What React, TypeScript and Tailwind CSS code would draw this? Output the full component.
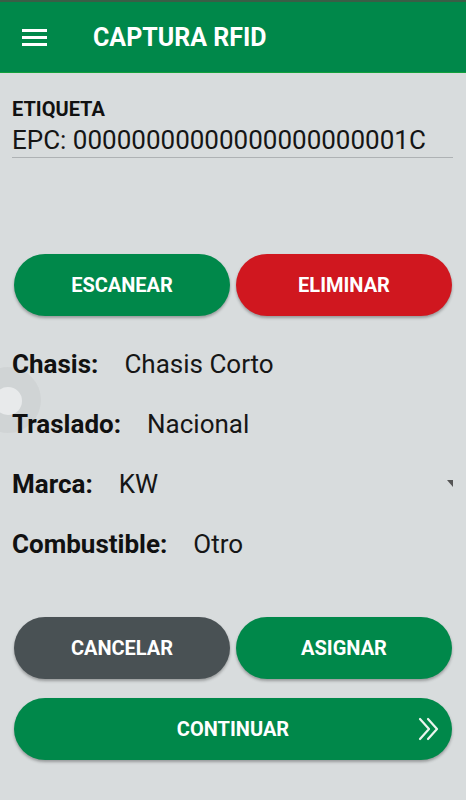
import React from "react";

const font = { fontFamily: "Roboto, 'Noto Sans', sans-serif" };

function Row({ label, value, dropdown }: { label: string; value: string; dropdown?: boolean }) {
  return (
    <div className="relative flex items-center h-[26px] leading-none text-[26px]">
      <span className="font-bold text-[#111]">{label}</span>
      <span className="ml-[26px] text-[#161616]">{value}</span>
      {dropdown && (
        <svg className="absolute right-[1px] top-[9px]" width="6" height="7" viewBox="0 0 6 7">
          <polygon points="0,0 6,0 6,7" fill="#555" />
        </svg>
      )}
    </div>
  );
}

export default function App() {
  return (
    <div className="relative w-[466px] h-[800px] bg-[#d8dcdd] overflow-hidden" style={font}>
      {/* Toolbar */}
      <header className="h-[73px] bg-[#00884a] border-t-2 border-t-[#3a5e46] border-b border-b-[#12a03c] flex items-center">
        <div className="ml-[22px] w-[25px] flex flex-col gap-[4px]">
          <span className="h-[3px] bg-white" />
          <span className="h-[3px] bg-white" />
          <span className="h-[3px] bg-white" />
        </div>
        <h1 className="ml-[46px] text-white text-[25px] font-bold leading-none">CAPTURA RFID</h1>
      </header>

      <main className="px-3">
        {/* Etiqueta */}
        <div className="pt-[26px]">
          <div className="text-[20px] leading-none font-bold text-[#111]">ETIQUETA</div>
          <div className="mt-[8px] mr-[1px] pb-[4px] border-b border-[#aeb2b4] text-[26px] leading-none text-[#151515] whitespace-nowrap">
            EPC: 00000000000000000000001C
          </div>
        </div>

        {/* Scan / delete */}
        <div className="mt-[96px] grid grid-cols-2 gap-[6px] px-[2px]">
          <button className="h-[62px] rounded-full bg-[#00884a] text-white text-[20px] font-bold shadow-[0_2px_3px_rgba(0,0,0,0.3)]">
            ESCANEAR
          </button>
          <button className="h-[62px] rounded-full bg-[#d0171f] text-white text-[20px] font-bold shadow-[0_2px_3px_rgba(0,0,0,0.3)]">
            ELIMINAR
          </button>
        </div>

        {/* Fields */}
        <div className="mt-[35px] flex flex-col gap-[34px]">
          <Row label="Chasis:" value="Chasis Corto" />
          <Row label="Traslado:" value="Nacional" />
          <Row label="Marca:" value="KW" dropdown />
          <Row label="Combustible:" value="Otro" />
        </div>

        {/* Actions */}
        <div className="mt-[60px] px-[2px] flex flex-col gap-[19px]">
          <div className="grid grid-cols-2 gap-[6px]">
            <button className="h-[62px] rounded-full bg-[#495154] text-white text-[20px] font-bold shadow-[0_2px_3px_rgba(0,0,0,0.3)]">
              CANCELAR
            </button>
            <button className="h-[62px] rounded-full bg-[#00884a] text-white text-[20px] font-bold shadow-[0_2px_3px_rgba(0,0,0,0.3)]">
              ASIGNAR
            </button>
          </div>
          <button className="relative h-[62px] rounded-full bg-[#00884a] text-white text-[20px] font-bold shadow-[0_2px_3px_rgba(0,0,0,0.3)]">
            CONTINUAR
            <svg className="absolute right-[12px] top-[19px]" width="22" height="24" viewBox="0 0 22 24" fill="none" stroke="#eaf5ee" strokeWidth="2.2" strokeLinecap="round" strokeLinejoin="round">
              <polyline points="2,2 11,12 2,22" />
              <polyline points="10,2 19,12 10,22" />
            </svg>
          </button>
        </div>
      </main>

      {/* touch ripple */}
      <div className="absolute left-[-25px] top-[367px] w-[66px] h-[66px] rounded-full bg-black/[0.035]" />
      <div className="absolute left-[-6px] top-[387px] w-[28px] h-[28px] rounded-full bg-[#e8eaeb]" />
    </div>
  );
}
